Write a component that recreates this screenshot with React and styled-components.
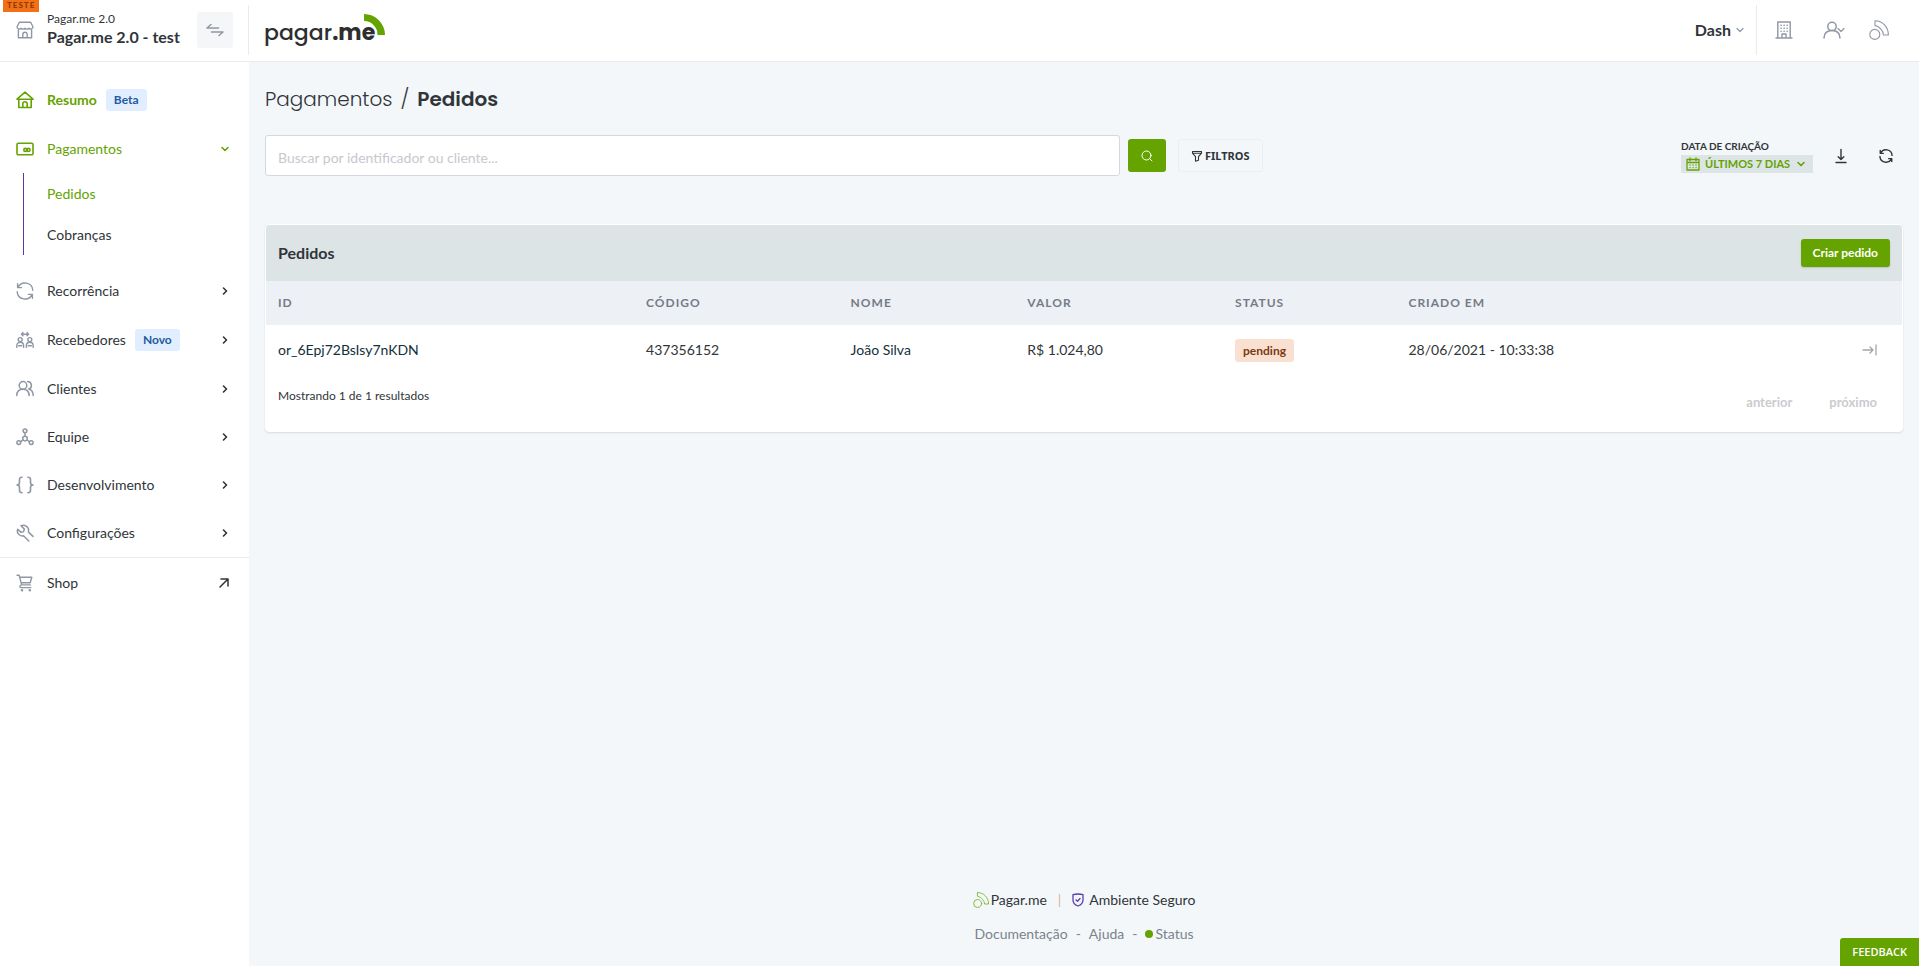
import React from 'react';
import styled, { createGlobalStyle } from 'styled-components';

const green = '#65a300';
const ink = '#303539';
const muted = '#9097a4';
const body = "Lato, 'Open Sans', sans-serif";
const display = "Poppins, Inter, sans-serif";

const GlobalStyle = createGlobalStyle`
  *, *::before, *::after { box-sizing: border-box; }
  body { margin: 0; background: #f3f7fa; color: ${ink}; font: 14px/20px ${body}; }
  button, input { font: inherit; color: inherit; }
  button { cursor: pointer; border: 0; padding: 0; background: none; }
  a { color: inherit; text-decoration: none; }
`;

const Svg = styled.svg.attrs({ 'aria-hidden': true })`
  display: block;
  flex: none;
  fill: none;
  stroke: currentColor;
  stroke-width: ${p => p.$w || 1.4};
  stroke-linecap: round;
  stroke-linejoin: round;
`;

const Page = styled.div`
  min-height: 100vh;
  display: flex;
  flex-direction: column;
`;

/* Top bar */
const TopBar = styled.header`
  display: flex;
  align-items: stretch;
  height: 62px;
  background: #fff;
  border-bottom: 1px solid #e9ebee;
`;
const Company = styled.div`
  position: relative;
  flex: none;
  width: 248px;
  display: flex;
  align-items: center;
  gap: 13px;
  padding: 0 15px 2px 16px;
  color: ${muted};
`;
const EnvTag = styled.span`
  position: absolute;
  top: 0;
  left: 3px;
  height: 12px;
  padding: 0 4px;
  background: #f37116;
  color: #8f3b0a;
  font-size: 8px;
  line-height: 11px;
  font-weight: 900;
  letter-spacing: 1px;
`;
const CompanyName = styled.div`
  flex: 1;
  display: flex;
  flex-direction: column;
  color: ${ink};
  white-space: nowrap;
  padding-bottom: 2px;
`;
const Small = styled.span`
  font-size: 12px;
  line-height: 16px;
`;
const Strong = styled.strong`
  font-size: 16px;
  line-height: 20px;
  font-weight: 700;
`;
const SwapButton = styled.button`
  width: 36px;
  height: 36px;
  display: grid;
  place-items: center;
  border-radius: 3px;
  background: #f5f6f8;
  color: ${muted};
`;
const Divider = styled.span`
  flex: none;
  width: 1px;
  margin: 5px 0 6px;
  background: #e9ebee;
`;
const Brand = styled.a`
  display: flex;
  align-items: center;
  padding-left: 16px;
`;
const TopActions = styled.nav`
  margin-left: auto;
  display: flex;
  align-items: stretch;
`;
const DashButton = styled.button`
  display: flex;
  align-items: center;
  gap: 5px;
  padding: 0 12px 2px 0;
  font-size: 16px;
  font-weight: 700;
  svg { color: ${muted}; }
`;
const IconGroup = styled.div`
  display: flex;
  align-items: center;
  gap: 24px;
  padding: 0 30px 2px 18px;
`;
const IconButton = styled.button`
  display: flex;
  align-items: center;
  color: ${p => p.$color || muted};
`;
const CompanyButton = styled(IconButton)`
  margin-right: 6px;
`;
const AccountButton = styled(IconButton)`
  svg + svg { margin-left: -4px; }
`;

/* Sidebar */
const Shell = styled.div`
  flex: 1;
  display: flex;
`;
const Sidebar = styled.nav`
  flex: none;
  width: 249px;
  padding-top: 13px;
  background: #fff;
`;
const NavItem = styled.a`
  display: flex;
  align-items: center;
  gap: 13px;
  height: ${p => (p.$tall ? 50 : 48)}px;
  padding: 0 20px 0 16px;
  color: ${p => (p.$active ? green : ink)};
  font-weight: ${p => (p.$bold ? 700 : 400)};
  > svg:first-child { color: ${p => (p.$active ? green : muted)}; }
  > svg:last-child { margin-left: auto; }
`;
const Label = styled.span`
  display: flex;
  align-items: center;
  gap: 9px;
`;
const Badge = styled.span`
  padding: 0 8px;
  border-radius: 3px;
  background: #e0eeff;
  color: #2559a0;
  font-size: 12px;
  line-height: 22px;
  font-weight: 700;
`;
const SubNav = styled.div`
  margin: 0 0 12px 23px;
  border-left: 1px solid #5b3c9c;
`;
const SubItem = styled.a`
  display: block;
  padding-left: 23px;
  line-height: 41px;
  color: ${p => (p.$active ? green : ink)};
`;
const NavSection = styled.div`
  border-top: 1px solid #e9ebee;
`;

/* Content */
const Content = styled.main`
  flex: 1;
  min-width: 0;
  display: flex;
  flex-direction: column;
  padding: 16px 16px 22px;
`;
const Title = styled.h1`
  margin: 5px 0 20px;
  display: flex;
  gap: 8px;
  font: 300 20px/32px ${display};
  color: ${ink};
  b { font-weight: 600; }
  i { font-style: normal; }
`;
const Toolbar = styled.div`
  display: flex;
  align-items: center;
`;
const SearchForm = styled.form`
  flex: 0 1 901px;
  display: flex;
  align-items: center;
  gap: 8px;
`;
const SearchInput = styled.input`
  flex: 1;
  min-width: 0;
  height: 41px;
  padding: 3px 12px 0;
  border: 1px solid #d3d9de;
  border-radius: 3px;
  background: #fff;
  outline: 0;
  &::placeholder { color: #c6c9ce; opacity: 1; }
`;
const SearchButton = styled.button`
  width: 38px;
  height: 33px;
  display: grid;
  place-items: center;
  border-radius: 3px;
  background: ${green};
  color: #fff;
`;
const FilterButton = styled.button`
  display: flex;
  align-items: center;
  gap: 2px;
  height: 33px;
  margin-left: 12px;
  padding: 0 12px;
  border: 1px solid #ebeff3;
  border-radius: 3px;
  font: 700 11px/16px 'Noto Sans', sans-serif;
`;
const Tools = styled.div`
  margin-left: auto;
  display: flex;
  align-items: center;
  padding-right: 10px;
`;
const DateFilter = styled.div`
  display: flex;
  flex-direction: column;
  gap: 1px;
  font-size: 11px;
  font-weight: 700;
  margin-right: 20px;
`;
const DateLabel = styled.label`
  font-size: 10px;
  line-height: 16px;
`;
const DateButton = styled.button`
  display: flex;
  align-items: center;
  gap: 5px;
  width: 132px;
  height: 18px;
  padding: 0 8px 0 5px;
  background: #dce4e6;
  color: ${green};
  white-space: nowrap;
  svg:last-child { margin-left: auto; }
`;
const ToolButton = styled(IconButton)`
  margin-right: ${p => p.$gap || 0}px;
`;

const Card = styled.section`
  margin-top: 48px;
  border: 1px solid #fff;
  border-radius: 4px;
  background: #fff;
  box-shadow: 0 1px 2px rgba(40, 60, 80, 0.14);
  overflow: hidden;
`;
const CardHead = styled.header`
  display: flex;
  align-items: center;
  justify-content: space-between;
  height: 56px;
  padding: 0 12px;
  background: #dce4e6;
`;
const CardTitle = styled.h2`
  margin: 0;
  font-size: 16px;
  line-height: 20px;
  font-weight: 700;
`;
const CreateButton = styled.button`
  height: 28px;
  padding: 0 12px;
  border-radius: 3px;
  background: ${green};
  color: #fff;
  font-size: 12px;
  font-weight: 700;
  box-shadow: 0 1px 2px rgba(40, 60, 80, 0.2);
`;
const Table = styled.table`
  width: 100%;
  table-layout: fixed;
  border-collapse: collapse;
`;
const Col = styled.col`
  width: ${p => p.$w};
`;
const Th = styled.th`
  height: 44px;
  padding: 0 12px;
  background: #edf0f5;
  color: #757b86;
  font-size: 12px;
  line-height: 16px;
  font-weight: 700;
  letter-spacing: 1px;
  text-align: left;
`;
const Td = styled.td`
  height: 50px;
  padding: 0 ${p => (p.$end ? 25 : 12)}px 0 12px;
  color: ${p => (p.$dark ? '#12303a' : ink)};
  svg { margin-left: auto; color: #a2a6ab; }
`;
const Status = styled.span`
  display: block;
  width: fit-content;
  padding: 0 8px;
  border-radius: 3px;
  background: #fae0d1;
  color: #7c3a12;
  font-size: 12px;
  line-height: 23px;
  font-weight: 700;
`;
const CardFoot = styled.footer`
  display: flex;
  justify-content: space-between;
  height: 56px;
  padding: 13px 25px 0 12px;
`;
const Pager = styled.div`
  display: flex;
  gap: 37px;
  padding-top: 6px;
`;
const PageButton = styled.button`
  height: 16px;
  color: #cacccf;
  font-size: 13px;
  line-height: 16px;
  font-weight: 700;
`;

const Footer = styled.footer`
  margin-top: auto;
  display: flex;
  flex-direction: column;
  align-items: center;
  gap: 14px;
`;
const FooterRow = styled.div`
  display: flex;
  align-items: center;
  gap: ${p => p.$gap}px;
  color: ${p => p.$color || ink};
`;
const FooterLink = styled.a`
  display: flex;
  align-items: center;
  gap: ${p => p.$gap || 2}px;
`;
const Dot = styled.span`
  width: 8px;
  height: 8px;
  border-radius: 50%;
  background: ${green};
`;
const Bar = styled.span`
  color: #d8b294;
`;
const Tint = styled.span`
  color: ${p => p.$c};
`;
const Feedback = styled.button`
  position: fixed;
  right: 0;
  bottom: 0;
  height: 28px;
  padding: 0 12px;
  border-radius: 3px 0 0 0;
  background: ${green};
  color: #fff;
  font: 600 11px/16px 'Open Sans', sans-serif;
`;

/* Drawings */
const Icon = ({ children, size = 18, w }) => (
  <Svg width={size} height={size} viewBox="0 0 18 18" $w={w}>{children}</Svg>
);
const Chevron = ({ down, size = 8, w = 1.6 }) => (
  <Svg width={size} height={size} viewBox="0 0 8 8" $w={w}>
    <path d={down ? 'M1 2.5l3 3 3-3' : 'M2.5 1l3 3-3 3'} />
  </Svg>
);
const Store = () => (
  <Icon w={1.4}>
    <path d="M3.4 1.2h11.2l2.4 4.600a2.300 2.300 0 0 1-4 1.400 2.600 2.600 0 0 1-4 0 2.600 2.600 0 0 1-4 0 2.300 2.300 0 0 1-4-1.400z" />
    <path d="M2.400 9v7.800h13.200V9M6.800 16.800v-3.400a2.200 2.200 0 0 1 4.400 0v3.400" />
  </Icon>
);
const Swap = () => (
  <Icon w={1.5}><path d="M5 3.500L1 7h11.500M13 14.500l4-3.500H5.500" /></Icon>
);
const House = () => (
  <Icon w={1.6}><path d="M1 8.200L9 1.200l8 7zM2.800 8.500v8h12.400v-8M6.800 16.300v-3.400a2.200 2.200 0 0 1 4.400 0v3.400" /></Icon>
);
const Wallet = () => (
  <Icon w={1.6}>
    <rect x="1" y="3.200" width="16" height="11.600" rx="1.400" />
    <circle cx="9.300" cy="9.900" r="1.500" /><circle cx="12.500" cy="9.900" r="1.500" />
  </Icon>
);
const Cycle = ({ size, w }) => (
  <Icon size={size} w={w}>
    <path d="M1.600 1.800v3.800h4M2 5.400a7.800 7.800 0 0 1 14.800 2.800M16.400 16.200v-3.800h-4M16 12.600A7.800 7.800 0 0 1 1.200 9.600" />
  </Icon>
);
const Receivers = () => (
  <Icon w={1.4}>
    <circle cx="4.200" cy="8.600" r="2" /><circle cx="13.800" cy="8.600" r="2" />
    <path d="M.8 16.400v-1.800a3.400 3.400 0 0 1 6.800 0v1.800M10.400 16.400v-1.800a3.400 3.400 0 0 1 6.800 0v1.800M2.600 14.800h3.200M12.200 14.800h3.200M5.400 3.200h7.200M7 1.600L5.400 3.200 7 4.800M11 1.600l1.600 1.600L11 4.800" />
  </Icon>
);
const People = () => (
  <Icon w={1.5}>
    <circle cx="7" cy="5.400" r="3.800" />
    <path d="M.8 15.600c0-4 2.400-6.400 6.200-6.400s6 2.400 6.200 6.400M11.600 1.600a3.800 3.800 0 0 1 1.200 7.400c2.600.8 4.400 3 4.400 6.600" />
  </Icon>
);
const Network = () => (
  <Icon w={1.5}>
    <circle cx="9" cy="2.800" r="1.900" /><circle cx="2.800" cy="14.600" r="1.900" /><circle cx="15.200" cy="14.600" r="1.900" /><circle cx="9" cy="10.600" r="2.300" />
    <path d="M9 4.800v3.400M7 12l-2.400 1.600M11 12l2.400 1.600" />
  </Icon>
);
const Braces = () => (
  <Icon w={1.6}>
    <path d="M6 1.200c-1.800 0-2.500.7-2.500 2.200v3.200C3.500 8 2.600 9 1 9c1.600 0 2.500 1 2.500 2.400v3.200c0 1.500.7 2.200 2.500 2.200M12 1.200c1.800 0 2.500.7 2.500 2.200v3.200c0 1.400.9 2.400 2.500 2.400-1.600 0-2.500 1-2.500 2.400v3.200c0 1.500-.7 2.200-2.500 2.200" />
  </Icon>
);
const Wrench = () => (
  <Icon w={1.5}>
    <path d="M17 12.400l-4.500-4.300c.5-3-1-5.700-3.700-6.600-1.400-.4-2.700-.2-3.800.3l3.400 3.300-.8 2.500-2.500.8L1.700 5.200c-.6 1.600-.4 3.500.8 4.900 1.200 1.500 3.100 2.100 5 1.700l5.300 5.200" />
  </Icon>
);
const Cart = () => (
  <Icon w={1.4}>
    <path d="M1 1.300h2.200l2.400 9.600h8.800M3.800 3.200h12l-1.600 5.600H5.200M14.800 13.600H5.200c-1.700 0-1.700-2.400.2-2.700" />
    <circle cx="6" cy="16.200" r=".6" /><circle cx="13.800" cy="16.200" r=".6" />
  </Icon>
);
const Building = () => (
  <Icon w={1.4}>
    <path d="M2.800 17V1h12.400v16M1 17h16M7 17v-4h4v4" />
    <path d="M6 4.200h.2M9 4.200h.2M12 4.200h.2M6 7.200h.2M9 7.200h.2M12 7.200h.2M6 10.200h.2M9 10.200h.2M12 10.200h.2" strokeWidth="1.500" />
  </Icon>
);
const User = () => (
  <Icon w={1.5}><circle cx="9" cy="5.400" r="4.200" /><path d="M1 17c.2-4.600 3-7.400 8-7.400s7.800 2.800 8 7.400" /></Icon>
);
const Mark = ({ size = 20 }) => (
  <Svg width={size} height={size} viewBox="0 0 20 20" $w="1.100">
    <circle cx="5.800" cy="14.400" r="5" />
    <path d="M6 .7C13.600.7 19.400 7 19.400 15h-5c0-4-3.600-8.400-8.400-9.600z" />
  </Svg>
);
const Logo = () => (
  <svg width="122" height="36" viewBox="0 0 122 36" role="img" aria-label="pagar.me">
    <text x="-1" y="27" fill="#2e2e2e" fontFamily={display} fontSize="22">
      <tspan fontWeight="500">pagar</tspan><tspan fontWeight="700">.me</tspan>
    </text>
    <path d="M99 1a21 21 0 0 1 21 21h-7.500A13.500 13.500 0 0 0 99 8z" fill={green} />
  </svg>
);
const Shield = () => (
  <Svg width="12" height="14" viewBox="0 0 12 14" $w="1.300">
    <path d="M1 1.600c3.400-.8 6.600-.8 10 0V7c0 3-2 5-5 6-3-1-5-3-5-6zM4 7l1.500 1.300L8 5.500" />
  </Svg>
);

const menu = [
  ['Clientes', People], ['Equipe', Network], ['Desenvolvimento', Braces], ['Configurações', Wrench],
];

export default function App() {
  return (
    <Page>
      <GlobalStyle />
      <TopBar>
        <Company>
          <EnvTag>TESTE</EnvTag>
          <Store />
          <CompanyName><Small>Pagar.me 2.0</Small><Strong>Pagar.me 2.0 - test</Strong></CompanyName>
          <SwapButton aria-label="Trocar empresa"><Swap /></SwapButton>
        </Company>
        <Divider />
        <Brand href="#"><Logo /></Brand>
        <TopActions>
          <DashButton>Dash <Chevron down w={1.2} /></DashButton>
          <Divider />
          <IconGroup>
            <CompanyButton aria-label="Empresa"><Building /></CompanyButton>
            <AccountButton aria-label="Conta"><User /><Chevron down w={1.2} /></AccountButton>
            <IconButton aria-label="Pagar.me"><Mark /></IconButton>
          </IconGroup>
        </TopActions>
      </TopBar>
      <Shell>
        <Sidebar>
          <NavItem href="#" $tall $active $bold><House /><Label>Resumo <Badge>Beta</Badge></Label></NavItem>
          <NavItem href="#" $active><Wallet /><Label>Pagamentos</Label><Chevron down /></NavItem>
          <SubNav>
            <SubItem href="#" $active>Pedidos</SubItem>
            <SubItem href="#">Cobranças</SubItem>
          </SubNav>
          <NavItem href="#"><Cycle /><Label>Recorrência</Label><Chevron /></NavItem>
          <NavItem href="#" $tall><Receivers /><Label>Recebedores <Badge>Novo</Badge></Label><Chevron /></NavItem>
          {menu.map(([name, Glyph]) => (
            <NavItem href="#" key={name}><Glyph /><Label>{name}</Label><Chevron /></NavItem>
          ))}
          <NavSection>
            <NavItem href="#" $tall>
              <Cart /><Label>Shop</Label>
              <Svg width="10" height="10" viewBox="0 0 10 10" $w="1.500"><path d="M1 9l8-8M2 1h7v7" /></Svg>
            </NavItem>
          </NavSection>
        </Sidebar>
        <Content>
          <Title><span>Pagamentos</span><i>/</i><b>Pedidos</b></Title>
          <Toolbar>
            <SearchForm>
              <SearchInput type="search" aria-label="Buscar" placeholder="Buscar por identificador ou cliente..." />
              <SearchButton type="button" aria-label="Pesquisar">
                <Svg width="12" height="12" viewBox="0 0 12 12" $w="1"><circle cx="5.500" cy="5.500" r="4.500" /><path d="M9 9l2 2" /></Svg>
              </SearchButton>
            </SearchForm>
            <FilterButton>
              <Svg width="12" height="12" viewBox="0 0 12 12" $w="1.100"><path d="M1.500 1.500h9v1.600L7.500 6.600v3.600l-3 1V6.600L1.500 3.100zM1.500 3.300h9" /></Svg>
              FILTROS
            </FilterButton>
            <Tools>
              <DateFilter>
                <DateLabel htmlFor="date">DATA DE CRIAÇÃO</DateLabel>
                <DateButton id="date">
                  <Svg width="14" height="14" viewBox="0 0 14 14" $w="1.300">
                    <path d="M1 2.500h12v10.500H1zM1 5.500h12M4 .8v3M10 .8v3" />
                    <path d="M4 8h.1M7 8h.1M10 8h.1M4 10.600h.1M7 10.600h.1M10 10.600h.1" />
                  </Svg>
                  ÚLTIMOS 7 DIAS
                  <Chevron down />
                </DateButton>
              </DateFilter>
              <ToolButton aria-label="Baixar" $color={ink} $gap={30}>
                <Svg width="16" height="16" viewBox="0 0 16 16"><path d="M8 1.500v10M5.200 8.800L8 11.600l2.800-2.800M3 14.500h10" /></Svg>
              </ToolButton>
              <ToolButton aria-label="Atualizar" $color={ink}><Cycle size={14} w={1.8} /></ToolButton>
            </Tools>
          </Toolbar>
          <Card>
            <CardHead><CardTitle>Pedidos</CardTitle><CreateButton>Criar pedido</CreateButton></CardHead>
            <Table>
              <colgroup>
                <Col $w="22.5%" /><Col $w="12.5%" /><Col $w="10.8%" /><Col $w="12.7%" /><Col $w="10.6%" /><Col /><Col $w="6%" />
              </colgroup>
              <thead>
                <tr>
                  <Th>ID</Th><Th>CÓDIGO</Th><Th>NOME</Th><Th>VALOR</Th><Th>STATUS</Th><Th>CRIADO EM</Th><Th aria-label="Abrir" />
                </tr>
              </thead>
              <tbody>
                <tr>
                  <Td $dark>or_6Epj72BsIsy7nKDN</Td>
                  <Td>437356152</Td>
                  <Td $dark>João Silva</Td>
                  <Td>R$ 1.024,80</Td>
                  <Td><Status>pending</Status></Td>
                  <Td>28/06/2021 - 10:33:38</Td>
                  <Td $end><Svg width="16" height="12" viewBox="0 0 16 12" $w="1.300"><path d="M2 6h10M9 3l3 3-3 3M15 1v10" /></Svg></Td>
                </tr>
              </tbody>
            </Table>
            <CardFoot>
              <Small>Mostrando 1 de 1 resultados</Small>
              <Pager><PageButton>anterior</PageButton><PageButton>próximo</PageButton></Pager>
            </CardFoot>
          </Card>
          <Footer>
            <FooterRow $gap={11}>
              <FooterLink href="#"><Tint $c="#7cb32b"><Mark size={16} /></Tint>Pagar.me</FooterLink>
              <Bar>|</Bar>
              <FooterLink as="span" $gap={5}><Tint $c="#5b3cb0"><Shield /></Tint>Ambiente Seguro</FooterLink>
            </FooterRow>
            <FooterRow $gap={8} $color="#7b838c">
              <FooterLink href="#">Documentação</FooterLink><span>-</span>
              <FooterLink href="#">Ajuda</FooterLink><span>-</span>
              <FooterLink href="#"><Dot />Status</FooterLink>
            </FooterRow>
          </Footer>
        </Content>
      </Shell>
      <Feedback>FEEDBACK</Feedback>
    </Page>
  );
}
